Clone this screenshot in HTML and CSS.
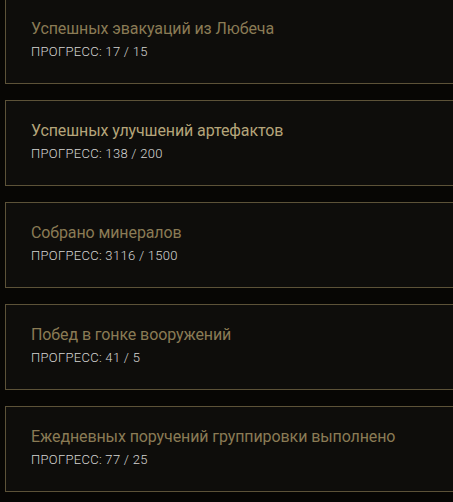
FILE: index.html
```html
<!DOCTYPE html>
<html lang="ru">
<head>
    <meta charset="UTF-8">
    <meta name="viewport" content="width=device-width, initial-scale=1.0">
    <title>Достижения</title>
    <link rel="stylesheet" href="styles.css">
</head>
<body>
    <div class="achievements">
        <div class="achievement">
            <div class="achievement-title">Успешных эвакуаций из Любеча</div>
            <div class="achievement-progress">Прогресс: 17 / 15</div>
        </div>
        <div class="achievement active">
            <div class="achievement-title">Успешных улучшений артефактов</div>
            <div class="achievement-progress">Прогресс: 138 / 200</div>
        </div>
        <div class="achievement">
            <div class="achievement-title">Собрано минералов</div>
            <div class="achievement-progress">Прогресс: 3116 / 1500</div>
        </div>
        <div class="achievement">
            <div class="achievement-title">Побед в гонке вооружений</div>
            <div class="achievement-progress">Прогресс: 41 / 5</div>
        </div>
        <div class="achievement">
            <div class="achievement-title">Ежедневных поручений группировки выполнено</div>
            <div class="achievement-progress">Прогресс: 77 / 25</div>
        </div>
    </div>
</body>
</html>
```

FILE: styles.css
```css
:root {
    --bg: #070604;
    --card-bg: #0e0d0b;
    --border: #5c5238;
    --title: #8a7b55;
    --title-active: #b5a57a;
    --text: #d4d4d2;
}

body {
    font-family: Roboto, "Noto Sans", sans-serif;
    background: var(--bg);
    margin: 0;
    overflow: hidden;
}

.achievements {
    display: flex;
    flex-direction: column;
    gap: 16px;
    margin-top: -2px;
    padding-left: 5px;
}

.achievement {
    background: var(--card-bg);
    border: 1px solid var(--border);
    border-right: none;
    padding: 20px 0 0 25px;
    height: 64px;
}

.achievement-title {
    color: var(--title);
    font-size: 16px;
    line-height: 20px;
    letter-spacing: -0.1px;
    white-space: nowrap;
}

.achievement.active .achievement-title {
    color: var(--title-active);
}

.achievement-progress {
    color: var(--text);
    font-size: 13px;
    font-weight: 300;
    line-height: 16px;
    letter-spacing: 0.3px;
    margin-top: 5px;
    text-transform: uppercase;
}
```
